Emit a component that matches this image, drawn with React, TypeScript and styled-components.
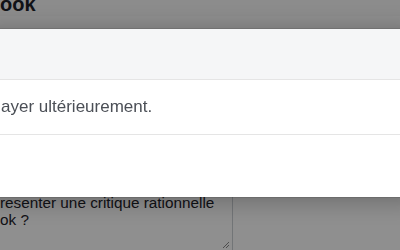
import React from "react";
import styled, { createGlobalStyle } from "styled-components";

const GlobalStyle = createGlobalStyle`
  html, body {
    margin: 0;
    padding: 0;
    width: 400px;
    height: 250px;
    overflow: hidden;
    background: #ffffff;
    font-family: "Liberation Sans", Arial, sans-serif;
  }
`;

const Page = styled.div`
  width: 400px;
  height: 250px;
  display: flex;
  flex-direction: column;
  background: #fafafa;
`;

const PageTitle = styled.h2`
  margin: -8px 0 0 0;
  font-size: 20px;
  line-height: 24px;
  font-weight: bold;
  color: #1d2129;
`;

const Form = styled.div`
  flex: 1;
  display: flex;
  flex-direction: column;
  justify-content: flex-end;
  background: #ffffff;
`;

const TextArea = styled.div`
  position: relative;
  box-sizing: border-box;
  width: 233px;
  height: 62px;
  border-right: 1px solid #ccd0d5;
  padding-top: 6px;
  font-size: 15.3px;
  line-height: 17px;
  color: #1d2129;
`;

const Grip = styled.svg`
  position: absolute;
  right: 2px;
  bottom: 1px;
`;

const Overlay = styled.div`
  position: fixed;
  inset: 0;
  background: rgba(0, 0, 0, 0.44);
  display: flex;
  flex-direction: column;
  padding-top: 29px;
`;

const Modal = styled.div`
  margin: 0 -20px;
  background: #ffffff;
  box-shadow: 0 2px 26px rgba(0, 0, 0, 0.3), 0 0 0 1px rgba(0, 0, 0, 0.1);
  display: flex;
  flex-direction: column;
`;

const ModalHeader = styled.div`
  height: 50px;
  background: #f5f6f7;
  border-bottom: 1px solid #e5e5e5;
`;

const ModalBody = styled.div`
  height: 54px;
  padding: 0 0 0 21px;
  border-bottom: 1px solid #e5e5e5;
  display: flex;
  align-items: center;
  font-size: 17px;
  line-height: 20px;
  color: #4b4f56;
`;

const ModalFooter = styled.div`
  height: 62px;
  background: #ffffff;
`;

export default function App() {
  return (
    <>
      <GlobalStyle />
      <Page>
        <PageTitle>ook</PageTitle>
        <Form>
          <TextArea>
            resenter une critique rationnelle
            <br />
            ok ?
            <Grip width="8" height="8" viewBox="0 0 8 8">
              <path d="M1 7 L7 1 M4 7 L7 4" stroke="#8a8a8a" strokeWidth="1" />
            </Grip>
          </TextArea>
        </Form>
      </Page>
      <Overlay>
        <Modal>
          <ModalHeader />
          <ModalBody>ayer ultérieurement.</ModalBody>
          <ModalFooter />
        </Modal>
      </Overlay>
    </>
  );
}
